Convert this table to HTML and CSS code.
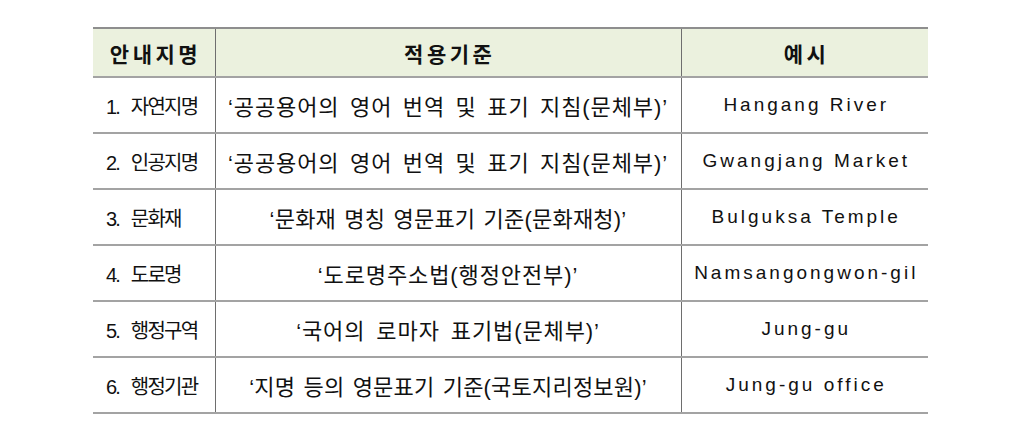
FILE: index.html
```html
<!DOCTYPE html>
<html lang="ko">
<head>
<meta charset="utf-8">
<link rel="stylesheet" href="styles.css">
</head>
<body>
<table class="guide">
  <colgroup>
    <col class="c1"><col class="c2"><col class="c3">
  </colgroup>
  <thead>
    <tr>
      <th class="h1">안내지명</th>
      <th class="h2">적용기준</th>
      <th class="h3">예시</th>
    </tr>
  </thead>
  <tbody>
    <tr><td class="name">1. 자연지명</td><td class="rule wide">‘공공용어의 영어 번역 및 표기 지침(문체부)’</td><td class="ex">Hangang River</td></tr>
    <tr><td class="name">2. 인공지명</td><td class="rule wide">‘공공용어의 영어 번역 및 표기 지침(문체부)’</td><td class="ex">Gwangjang Market</td></tr>
    <tr><td class="name">3. 문화재</td><td class="rule narrow">‘문화재 명칭 영문표기 기준(문화재청)’</td><td class="ex">Bulguksa Temple</td></tr>
    <tr><td class="name">4. 도로명</td><td class="rule">‘도로명주소법(행정안전부)’</td><td class="ex">Namsangongwon-gil</td></tr>
    <tr><td class="name">5. 행정구역</td><td class="rule">‘국어의 로마자 표기법(문체부)’</td><td class="ex">Jung-gu</td></tr>
    <tr><td class="name">6. 행정기관</td><td class="rule narrow">‘지명 등의 영문표기 기준(국토지리정보원)’</td><td class="ex">Jung-gu office</td></tr>
  </tbody>
</table>
</body>
</html>
```

FILE: styles.css
```css
html, body {
  margin: 0;
  padding: 0;
  background: #ffffff;
}
body {
  padding: 27px 0 0 93px;
  font-family: "Liberation Sans", "Noto Sans CJK KR", sans-serif;
  color: #111;
}
.guide {
  border-collapse: collapse;
  table-layout: fixed;
  width: 835px;
}
.c1 { width: 122px; }
.c2 { width: 466px; }
.c3 { width: 247px; }

.guide th, .guide td {
  padding: 0;
  border-bottom: 2px solid #a3a3a3;
  border-left: 1px solid #6e6e6e;
  white-space: nowrap;
  overflow: visible;
}
.guide th:first-child, .guide td:first-child {
  border-left: none;
}
.guide thead th {
  border-top: 2px solid #8e8e8e;
  background: #ebf1de;
  height: 47px;
  font-family: "Noto Sans CJK KR", sans-serif;
  font-weight: 700;
  font-size: 21px;
  letter-spacing: 3.5px;
  text-indent: 3.5px;
  text-align: center;
  vertical-align: middle;
}
.guide tbody td {
  height: 54px;
  vertical-align: middle;
  font-size: 20px;
}
.name {
  padding-left: 13px !important;
  text-align: left;
  letter-spacing: -1.8px;
  word-spacing: 8px;
}
.rule {
  text-align: center;
  font-size: 22px !important;
  letter-spacing: 0.9px;
  word-spacing: 4px;
}
.rule.wide {
  letter-spacing: 0.9px;
  word-spacing: 3.5px;
}
.rule.narrow {
  letter-spacing: 0.2px;
  word-spacing: 2px;
}
.ex {
  text-align: center;
  font-size: 19px !important;
  letter-spacing: 3px;
  text-indent: 3px;
  word-spacing: 0;
}
```
